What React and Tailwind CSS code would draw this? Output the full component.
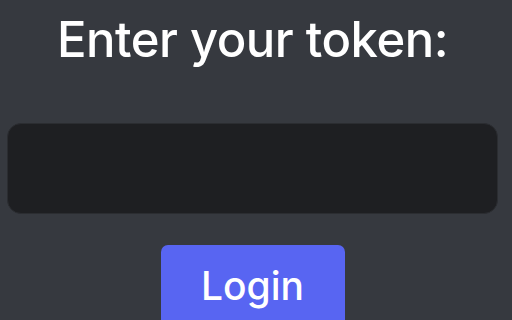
export default function App() {
  return (
    <div
      className="w-[512px] h-[320px] overflow-hidden bg-[#36393f]"
      style={{ fontFamily: "Inter, 'Noto Sans', sans-serif" }}
    >
      <div className="w-[505px] flex flex-col items-center">
        <h1 className="shrink-0 mt-[12px] text-white text-[49px] font-medium leading-[56px] tracking-[-0.5px]">
          Enter your token:
        </h1>
        <div className="shrink-0 mt-[55px] w-[491px] h-[91px] rounded-[14px] bg-[#1e1f22] border border-[#2b2d31]" />
        <button className="shrink-0 mt-[31px] w-[184px] h-[90px] pb-[8px] rounded-[7px] bg-[#5865f2] text-white text-[39px] font-medium">
          Login
        </button>
      </div>
    </div>
  );
}
